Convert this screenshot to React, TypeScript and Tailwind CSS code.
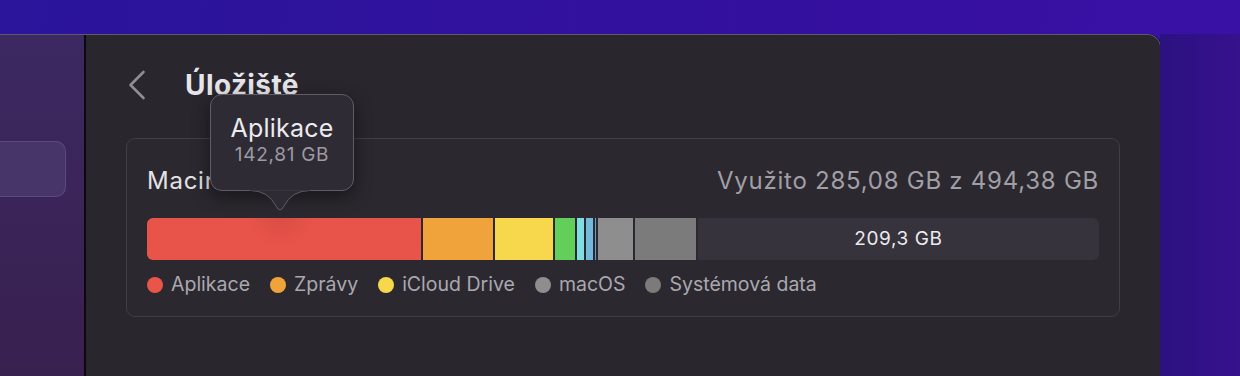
type Segment = {
  id: string;
  width: number;
  color: string;
};

const segments: Segment[] = [
  { id: 'apps', width: 274, color: 'bg-[radial-gradient(circle_at_134px_-4px,#d94d43,#e9544a_36px)]' },
  { id: 'messages', width: 70, color: 'bg-[#f0a23b]' },
  { id: 'icloud', width: 58, color: 'bg-[#f7d74b]' },
  { id: 'green', width: 20, color: 'bg-[#62cf5b]' },
  { id: 'cyan', width: 7, color: 'bg-[#7fdde3]' },
  { id: 'blue', width: 7, color: 'bg-[#72b9da]' },
  { id: 'thin', width: 1, color: 'bg-[#5f9fcb]' },
  { id: 'macos', width: 35, color: 'bg-[#8e8e8f]' },
  { id: 'system', width: 61, color: 'bg-[#7b7b7c]' },
];

const legend = [
  { label: 'Aplikace', dot: 'bg-[#ea5549]' },
  { label: 'Zprávy', dot: 'bg-[#f0a23b]' },
  { label: 'iCloud Drive', dot: 'bg-[#f7d74b]' },
  { label: 'macOS', dot: 'bg-[#8e8e8f]' },
  { label: 'Systémová data', dot: 'bg-[#7b7b7c]' },
];

function Tooltip() {
  return (
    <div className="absolute left-[124px] top-[59px] z-10">
      <div className="flex h-[97px] w-[144px] flex-col items-center rounded-[12px] border border-[#605d66] bg-[#2e2b34] pt-[19px] shadow-[0_6px_18px_rgba(0,0,0,0.45)]">
        <div className="text-[25px] leading-[28px] tracking-[0.2px] text-[#eceaef]">Aplikace</div>
        <div className="mt-[2px] text-[19px] leading-[22px] tracking-[0.7px] text-[#9d9aa3]">142,81 GB</div>
      </div>
      <svg className="absolute left-[40px] top-[95px]" width="60" height="27" viewBox="0 0 60 27">
        <path d="M0 1.5 Q18 1.5 26 17 Q30 25 34 17 Q42 1.5 60 1.5 Z" fill="#2e2b34" />
        <path d="M0 1.5 Q18 1.5 26 17 Q30 25 34 17 Q42 1.5 60 1.5" fill="none" stroke="#605d66" strokeWidth="1" />
        <rect x="0" y="0" width="60" height="1.6" fill="#2e2b34" />
      </svg>
    </div>
  );
}

export default function App() {
  return (
    <div className="relative h-[376px] w-[1240px] overflow-hidden bg-[linear-gradient(100deg,#2a159b_0%,#34109f_60%,#3b11a6_100%)] font-['Inter',sans-serif]">
      <div className="flex h-full flex-col pt-[34px]">
        <div className="mr-[79px] flex flex-1 overflow-hidden rounded-tr-[14px] border-t border-r border-[#5d5a64] shadow-[1px_0_0_#0c0a12]">
          {/* sidebar */}
          <div className="w-[84px] bg-[linear-gradient(180deg,#3d2962_0%,#38204f_100%)] pt-[106px]">
            <div className="h-[56px] w-[66px] rounded-r-[10px] border border-l-0 border-[#5b4a7c] bg-[#47356a]" />
          </div>
          <div className="w-[2px] bg-[#0b090e]" />

          {/* main */}
          <div className="relative flex-1 bg-[#29262d] px-[40px] pt-[31px]">
            <div className="flex h-[38px] items-center">
              <svg width="20" height="30" viewBox="0 0 20 30" className="ml-[1px]">
                <path d="M16.5 2 L3.5 15 L16.5 28" fill="none" stroke="#8f8d94" strokeWidth="2.6" strokeLinecap="round" strokeLinejoin="round" />
              </svg>
              <h1 className="ml-[38px] text-[28px] font-bold tracking-[0.4px] text-[#e6e5e9]">Úložiště</h1>
            </div>

            <div className="mt-[34px] rounded-[9px] border border-[#413e46] bg-[#2b282f] px-[20px] pb-[19px] pt-[27px]">
              <div className="flex h-[30px] items-center justify-between text-[24px] tracking-[0.75px]">
                <span className="text-[#e3e2e6]">Macintosh HD</span>
                <span className="text-[#a19fa6]">Využito 285,08 GB z 494,38 GB</span>
              </div>

              <div className="mt-[22px] flex h-[42px] gap-[2px] overflow-hidden rounded-[6px]">
                {segments.map((s) => (
                  <div key={s.id} className={`h-full shrink-0 ${s.color}`} style={{ width: s.width }} />
                ))}
                <div className="flex flex-1 items-center justify-center bg-[#36333c] text-[19px] tracking-[0.6px] text-[#ebeaee]">
                  209,3 GB
                </div>
              </div>

              <div className="mt-[13px] flex h-[24px] items-center gap-[20px] text-[19.5px] text-[#aaa8af]">
                {legend.map((l) => (
                  <div key={l.label} className="flex items-center gap-[8px]">
                    <span className={`h-[16px] w-[16px] rounded-full ${l.dot}`} />
                    <span>{l.label}</span>
                  </div>
                ))}
              </div>
            </div>

            <Tooltip />
          </div>
        </div>
      </div>
      <div className="pointer-events-none absolute bottom-0 right-0 top-[34px] w-[80px] bg-[linear-gradient(90deg,#2c1180_0%,#36128d_100%)]" />
    </div>
  );
}
